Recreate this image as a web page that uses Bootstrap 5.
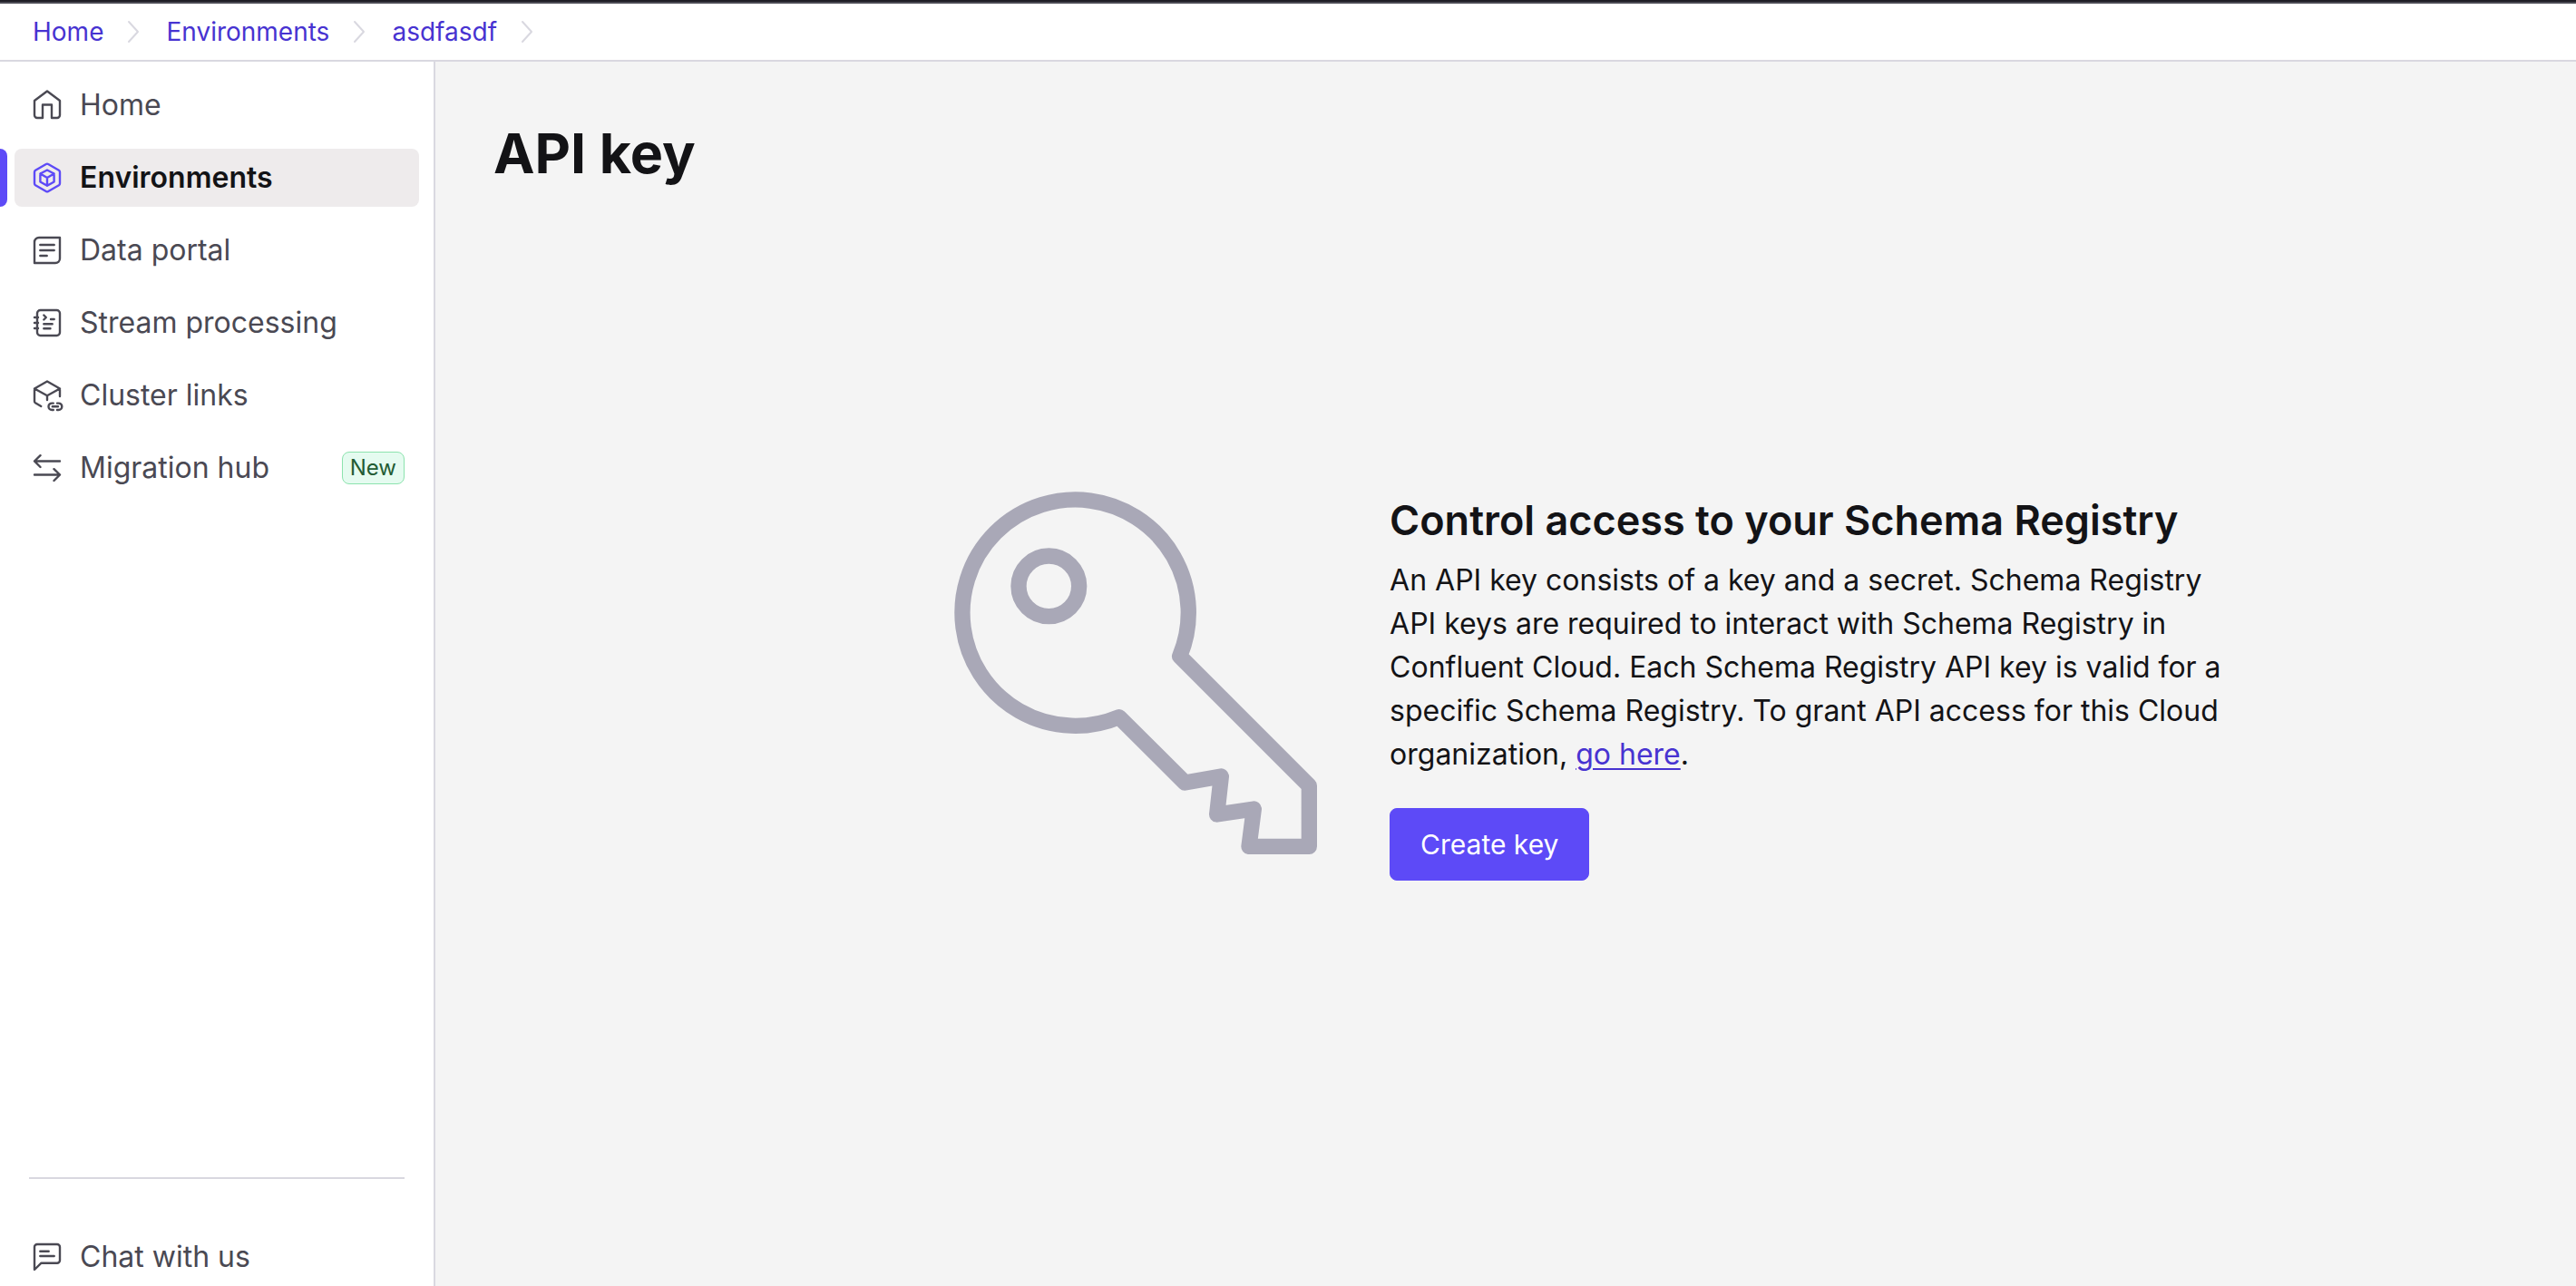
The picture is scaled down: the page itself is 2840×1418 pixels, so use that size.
<!DOCTYPE html>
<html lang="en">
<head>
<meta charset="utf-8">
<meta name="viewport" content="width=device-width, initial-scale=1">
<title>API key</title>
<link href="https://cdn.jsdelivr.net/npm/bootstrap@5.3.0/dist/css/bootstrap.min.css" rel="stylesheet">
<style>
  :root {
    --brand: #5d4af7;
    --brand-link: #4733d1;
    --ink: #131316;
    --ink-soft: #4a4953;
    --line: #d9d8e0;
    --canvas: #f4f4f4;
  }
  body {
    font-family: Inter, "Liberation Sans", sans-serif;
    font-size: 32px;
    line-height: 48px;
    color: var(--ink);
    background: var(--canvas);
  }
  svg { display: block; flex: none; overflow: visible; fill: none; stroke: currentColor; stroke-linejoin: round; stroke-linecap: round; }
  .topline { height: 4px; background: #1f1e26; border-bottom: 2px solid #4a4953; }
  .trail { height: 64px; padding: 0 36px; border-bottom: 2px solid var(--line); font-size: 28px; line-height: 40px; }
  .trail .breadcrumb-item { padding: 0; }
  .trail .breadcrumb-item::before { content: none; }
  .trail a { color: var(--brand-link); }
  .trail svg { width: 12px; height: 24px; margin: 0 30px 0 27px; stroke: var(--line); stroke-width: 2; }
  .side { flex: 0 0 480px; border-right: 2px solid var(--line); padding: 16px 16px 0 16px; }
  .side .nav { gap: 16px; }
  .side .nav-link { position: relative; height: 64px; padding: 0 16px 0 20px; gap: 20px; border-radius: 8px; color: var(--ink-soft); }
  .side .nav-link svg { width: 32px; height: 32px; stroke-width: 2.4; }
  .side .nav-link.active { background: #eeebec; color: var(--ink); font-weight: 600; }
  .side .nav-link.active svg { color: var(--brand); }
  .side .nav-link.active::before { content: ""; position: absolute; left: -16px; top: 0; width: 8px; height: 100%; background: var(--brand); border-radius: 0 8px 8px 0; }
  .side .tag-new { border: 1px solid #8ce3ae; background: #e5fbf0; color: #235c34; border-radius: 8px; font-size: 24px; line-height: 34px; font-weight: 400; padding: 0 8px; }
  .side-rule { height: 2px; margin: 0 16px 54px; background: var(--line); }
  .page-body { padding: 64px; }
  .page-body h1 { font-size: 61px; line-height: 74px; font-weight: 700; }
  .intro { display: grid; grid-template-columns: 73fr 100fr; column-gap: 80px; margin-top: 336px; }
  .intro svg { width: 400px; height: 400px; color: #a9a8b7; stroke-width: 52; }
  .intro-copy { max-width: 928px; }
  .intro-copy h2 { font-size: 45px; line-height: 64px; font-weight: 600; margin-bottom: 10px; }
  .intro-copy p { margin-bottom: 35px; }
  .intro-copy a { color: var(--brand-link); text-decoration-thickness: 2px; text-underline-offset: 4px; }
  .btn-create { --bs-btn-color: #fff; --bs-btn-bg: var(--brand); --bs-btn-border-color: var(--brand); --bs-btn-hover-color: #fff; --bs-btn-hover-bg: var(--brand-link); font-size: 30px; line-height: 48px; padding: 15px 33px; border-radius: 8px; }
</style>
<script src="https://cdn.jsdelivr.net/npm/bootstrap@5.3.0/dist/js/bootstrap.bundle.min.js"></script>
</head>
<body class="min-vh-100 d-flex flex-column">
<div class="topline"></div>
<nav class="trail bg-white d-flex align-items-center" aria-label="breadcrumb">
  <ol class="breadcrumb mb-0">
    <li class="breadcrumb-item d-flex align-items-center"><a class="text-decoration-none" href="#">Home</a><svg viewBox="0 0 12 24"><path d="M1 1l10 11L1 23"/></svg></li>
    <li class="breadcrumb-item d-flex align-items-center"><a class="text-decoration-none" href="#">Environments</a><svg viewBox="0 0 12 24"><path d="M1 1l10 11L1 23"/></svg></li>
    <li class="breadcrumb-item d-flex align-items-center"><a class="text-decoration-none" href="#">asdfasdf</a><svg viewBox="0 0 12 24"><path d="M1 1l10 11L1 23"/></svg></li>
  </ol>
</nav>
<div class="d-flex flex-grow-1">
  <aside class="side bg-white d-flex flex-column">
    <nav class="nav flex-column" aria-label="Main">
      <a class="nav-link d-flex align-items-center" href="#">
        <svg viewBox="0 0 32 32"><path d="M11 30V15.500H21V30h6a3 3 0 0 0 3-3V11L16 .5 2 11v16a3 3 0 0 0 3 3z"/></svg>Home</a>
      <a class="nav-link active d-flex align-items-center" aria-current="page" href="#">
        <svg viewBox="0 0 32 32"><path d="M14.800 1Q16 .2 17.200 1L28.900 7.800Q30 8.500 30 9.800V22.200Q30 23.500 28.900 24.200L17.200 31Q16 31.800 14.800 31L3.100 24.200Q2 23.500 2 22.200V9.800Q2 8.500 3.100 7.800z"/><path d="M16 7.500l7.600 4v9L16 24.800l-7.600-4.300v-9zM8.400 11.500L16 16l7.600-4.500M16 16v8.800"/></svg>Environments</a>
      <a class="nav-link d-flex align-items-center" href="#">
        <svg viewBox="0 0 32 32"><path d="M7 2H30V25a5 5 0 0 1-5 5H2V7a5 5 0 0 1 5-5zM8.300 10H23.700M8.300 16H23.700M8.300 22H15.700"/></svg>Data portal</a>
      <a class="nav-link d-flex align-items-center" href="#">
        <svg viewBox="0 0 32 32"><rect x="5" y="2" width="25" height="28" rx="3.500"/><path d="M2 10H6M2 16H6M2 22H6M12.300 7.500L14.800 10 12.300 12.500M20 12H23.700M12.300 17.200H21.700M12.300 22.300H19.500"/></svg>Stream processing</a>
      <a class="nav-link d-flex align-items-center" href="#">
        <svg viewBox="0 0 32 32"><path d="M9.300 28L3 24.300Q2 23.600 2 22.500V8.500L16 .5 30 8.500V17M2 8.500L16 16.300 30 8.500M16 16.300V21"/><path d="M22.800 24.600H21.200a3.700 3.700 0 0 0 0 7.400H22.800M27 24.600H28.600a3.700 3.700 0 0 1 0 7.400H27M21.800 28.300H28"/></svg>Cluster links</a>
      <a class="nav-link d-flex align-items-center" href="#">
        <svg viewBox="0 0 32 32"><path d="M30 8.500H2M8.500 2.200L2 8.500 8.500 15M2 23.500H30M23.500 17.200L30 23.500 23.500 30"/></svg>Migration hub<span class="tag-new ms-auto">New</span></a>
    </nav>
    <div class="mt-auto">
      <div class="side-rule"></div>
      <nav class="nav flex-column" aria-label="Support">
        <a class="nav-link d-flex align-items-center" href="#">
          <svg viewBox="0 0 32 32"><path d="M5 2H27a3 3 0 0 1 3 3V19.700a3 3 0 0 1-3 3H9.500L2 30V5a3 3 0 0 1 3-3zM8.300 9.800H17.700M8.300 15H23.700"/></svg>Chat with us</a>
      </nav>
    </div>
  </aside>
  <main class="page-body flex-grow-1">
    <h1 class="mb-0">API key</h1>
    <section class="intro">
      <svg class="ms-auto" viewBox="66 66 1200 1200" aria-hidden="true"><path d="M812 611A374 374 0 1 0 611 812L829 1029 949 1008 935 1134 1057 1116 1041 1240H1240V1039z"/><circle cx="379" cy="379" r="100"/></svg>
      <div class="intro-copy">
        <h2>Control access to your Schema Registry</h2>
        <p>An API key consists of a key and a secret. Schema Registry API keys are required to interact with Schema Registry in Confluent Cloud. Each Schema Registry API key is valid for a specific Schema Registry. To grant API access for this Cloud organization, <a href="#">go here</a>.</p>
        <button type="button" class="btn btn-create">Create key</button>
      </div>
    </section>
  </main>
</div>
</body>
</html>
